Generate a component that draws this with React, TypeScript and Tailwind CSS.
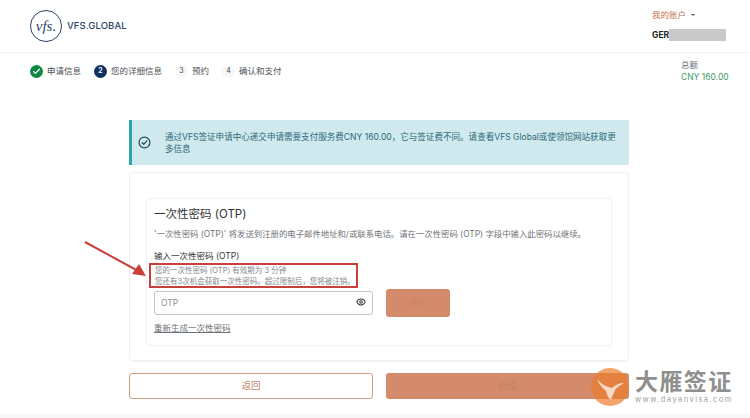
import { Check, Eye } from "lucide-react";

const font = "font-['Inter','Noto_Sans_CJK_SC',sans-serif]";

function Step({ n, label, state }: { n: string; label: string; state: "done" | "active" | "todo" }) {
  return (
    <div className="flex items-center gap-[4px]">
      {state === "done" && (
        <span className="flex h-[13px] w-[13px] items-center justify-center rounded-full bg-[#0f8a44] text-white">
          <Check size={9} strokeWidth={3} />
        </span>
      )}
      {state === "active" && (
        <span className="flex h-[13px] w-[13px] items-center justify-center rounded-full bg-[#12305f] text-[7px] font-semibold text-white">
          {n}
        </span>
      )}
      {state === "todo" && (
        <span className="flex h-[13px] w-[13px] items-center justify-center rounded-full bg-[#f7f7f7] text-[7px] text-[#444]">
          {n}
        </span>
      )}
      <span className="text-[8.5px] leading-none text-[#4a4f55]">{label}</span>
    </div>
  );
}

function Logo() {
  return (
    <div className="flex items-center gap-[5px]">
      <div className="flex h-[32px] w-[32px] items-center justify-center rounded-full border border-[#2b4468]">
        <span className="font-['Liberation_Serif',serif] text-[15px] italic leading-none text-[#2b4468]">vfs.</span>
      </div>
      <span className="text-[9.5px] font-medium tracking-[0.1px] text-[#2b4468]">VFS.GLOBAL</span>
    </div>
  );
}

export default function App() {
  return (
    <div className={`${font} relative h-[418px] w-[750px] overflow-hidden bg-white`}>
      {/* Header */}
      <header className="flex h-[53px] items-start justify-between border-b border-[#f3f3f3] pl-[30px] pr-[23px] pt-[10px]">
        <Logo />
        <div className="flex w-[75px] flex-col">
          <span className="flex items-center gap-[5px] text-[8.5px] leading-[10px] text-[#c0714e]">
            我的账户
            <span className="h-0 w-0 border-x-[2px] border-t-[2px] border-x-transparent border-t-[#555]" />
          </span>
          <div className="mt-[9px] flex items-center">
            <span className="text-[8.5px] font-bold leading-[12px] text-[#222]">GER</span>
            <span className="h-[12px] w-[57px] bg-[#c9c9c9]" />
          </div>
        </div>
      </header>

      {/* Steps */}
      <div className="flex h-[52px] items-start justify-between pl-[30px] pr-[22px]">
        <div className="flex items-center gap-[13px] pt-[12px]">
          <Step n="1" label="申请信息" state="done" />
          <Step n="2" label="您的详细信息" state="active" />
          <Step n="3" label="预约" state="todo" />
          <Step n="4" label="确认和支付" state="todo" />
        </div>
        <div className="flex w-[47px] flex-col pt-[6px]">
          <span className="text-[8.5px] leading-[12px] text-[#6b7280]">总额</span>
          <span className="whitespace-nowrap text-[8.5px] leading-[13px] text-[#3f9a68]">CNY 160.00</span>
        </div>
      </div>

      {/* Content */}
      <main className="ml-[129px] mt-[15px] flex w-[500px] flex-col">
        <div className="flex h-[45px] items-center border-l-[3px] border-[#2ba3ad] bg-[#cfe9ee] pl-[6px] pr-[10px]">
          <svg width="13" height="13" viewBox="0 0 24 24" fill="none" stroke="#1c4a57" strokeWidth="2.2" strokeLinecap="round" strokeLinejoin="round" className="shrink-0">
            <circle cx="12" cy="12" r="10" />
            <path d="M7.5 12.5l3 3 6-6.5" />
          </svg>
          <p className="ml-[14px] text-[8.55px] leading-[12px] text-[#2b6a78]">
            通过VFS签证申请中心递交申请需要支付服务费CNY 160.00，它与签证费不同。请查看VFS Global或使领馆网站获取更多信息
          </p>
        </div>

        <section className="mt-[7px] h-[189px] rounded-[3px] border border-[#f0f0f0] px-[16px] pt-[25px] shadow-[0_1px_2px_rgba(0,0,0,0.04)]">
          <div className="h-[148px] rounded-[3px] border border-[#f0f0f0] pl-[7px] pr-[10px] pt-[7px]">
            <h2 className="text-[11.5px] leading-[16px] text-[#333]">一次性密码 (OTP)</h2>
            <p className="mt-[6px] whitespace-nowrap text-[8.4px] leading-[12px] text-[#6f7479]">
              &apos;一次性密码 (OTP)&apos; 将发送到注册的电子邮件地址和/或联系电话。请在一次性密码 (OTP) 字段中输入此密码以继续。
            </p>
            <p className="mt-[11px] text-[8.5px] leading-[11px] text-[#333]">输入一次性密码 (OTP)</p>
            <div className="ml-[-5px] mt-[1px] h-[25px] w-[209px] border-2 border-[#c8403c] pl-[4px] pt-[1px] text-[7.5px] leading-[10.5px] text-[#858a8e]">
              <p>您的一次性密码 (OTP) 有效期为 3 分钟</p>
              <p className="whitespace-nowrap">您还有3次机会获取一次性密码。超过限制后，您将被注销。</p>
            </div>
            <div className="mt-[1px] flex items-center gap-[13px]">
              <div className="flex h-[24px] w-[219px] items-center justify-between rounded-[3px] border border-[#c4c4c4] pl-[6px] pr-[6px]">
                <span className="text-[8.5px] text-[#8a8a8a]">OTP</span>
                <Eye size={10} strokeWidth={2.5} className="mt-[-3px] text-[#333]" />
              </div>
              <button className="flex h-[28px] w-[64px] items-center justify-center rounded-[3px] bg-[#d48b6b] text-[8px] text-[#c98163]">
                验证
              </button>
            </div>
            <a className="mt-[5px] block w-fit text-[8.5px] leading-[12px] text-[#6f7479] underline">重新生成一次性密码</a>
          </div>
        </section>

        <div className="mt-[12px] flex gap-[13px]">
          <button className="h-[26px] w-[244px] rounded-[3px] border border-[#cf9d84] text-[9.5px] text-[#c08467]">
            返回
          </button>
          <button className="h-[26px] flex-1 rounded-[3px] bg-[#d48b6b] text-[9.5px] text-[#c98163]">
            继续
          </button>
        </div>
      </main>

      <div className="absolute bottom-0 left-0 h-[4px] w-full bg-[#f8f8f8]" />

      {/* Annotation arrow */}
      <svg className="absolute left-[80px] top-[238px]" width="70" height="42" viewBox="0 0 70 42" fill="none">
        <path d="M5 4L60 34" stroke="#c8403c" strokeWidth="2" />
        <path d="M52 36L66 38L59 26Z" fill="#c8403c" />
      </svg>

      {/* Watermark */}
      <div className="absolute left-[591px] top-[368px] flex items-center gap-[6px]">
        <svg width="38" height="38" viewBox="0 0 38 38">
          <circle cx="19" cy="19" r="19" fill="#ec7d2e" fillOpacity="0.7" />
          <path d="M6 11C9 18 12 20 15 23C16 27 17 30 20 32C21 28 23 25 24 22C27 18 30 17 33 15C28 15 24 17 21 20C16 19 11 17 6 11Z" fill="#fff" fillOpacity="0.7" />
        </svg>
        <div className="flex flex-col">
          <span className="whitespace-nowrap text-[23px] font-bold leading-[25px] tracking-[1.4px] text-[#8f8f8f]">大雁签证</span>
          <span className="whitespace-nowrap text-[7.5px] leading-[10px] tracking-[1.45px] text-[#a0a0a0]">www.dayanvisa.com</span>
        </div>
      </div>
    </div>
  );
}
